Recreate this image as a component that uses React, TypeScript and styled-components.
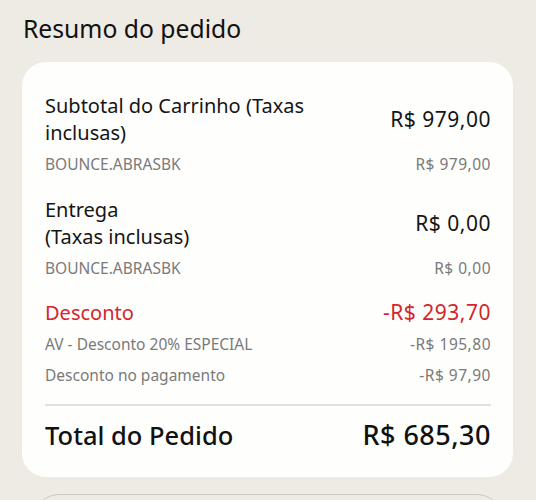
import React from "react";
import styled, { createGlobalStyle } from "styled-components";

const Global = createGlobalStyle`
  html, body { margin: 0; padding: 0; background: #eeeae4; }
  body { font-family: "Noto Sans", "Open Sans", sans-serif; color: #111; }
`;

const Page = styled.div`
  width: 536px;
  height: 500px;
  overflow: hidden;
  box-sizing: border-box;
  padding: 13px 23px 0 22px;
  background: #eeeae4;
`;

const Heading = styled.h1`
  margin: 0 0 17px 1px;
  font-size: 24.7px;
  line-height: 32px;
  font-weight: 400;
  color: #111;
`;

const Card = styled.section`
  background: #fefefd;
  border-radius: 24px;
  padding: 30px 22px 26px 23px;
  display: flex;
  flex-direction: column;
`;

const Group = styled.div<{ $gap?: number }>`
  display: flex;
  flex-direction: column;
  margin-top: ${(p) => p.$gap ?? 0}px;
`;

const MainRow = styled.div<{ $red?: boolean }>`
  display: flex;
  justify-content: space-between;
  align-items: center;
  font-size: 20px;
  line-height: 27px;
  color: ${(p) => (p.$red ? "#d4252c" : "#151515")};
`;

const SubRow = styled.div`
  display: flex;
  justify-content: space-between;
  align-items: center;
  margin-top: 8px;
  font-size: 15.5px;
  line-height: 20px;
  color: #7a7a7a;

  & + & {
    margin-top: 11px;
  }
`;

const Label = styled.span`
  max-width: 300px;
`;

const Value = styled.span<{ $size?: number; $spacing?: number }>`
  white-space: nowrap;
  font-size: ${(p) => (p.$size ? `${p.$size}px` : "inherit")};
  letter-spacing: ${(p) => p.$spacing ?? 0}px;
`;

const Divider = styled.hr`
  border: none;
  border-top: 2px solid #e2e0dd;
  margin: 19px 0 13px;
`;

const TotalRow = styled.div`
  display: flex;
  justify-content: space-between;
  align-items: center;
  font-size: 25.5px;
  line-height: 32px;
  font-weight: 500;
  color: #111;
`;

const NextButton = styled.div`
  margin: 17px 10px 0 11px;
  height: 50px;
  border: 1px solid #cdc8c0;
  border-radius: 28px;
  background: #eeeae4;
`;

export default function App() {
  return (
    <Page>
      <Global />
      <Heading>Resumo do pedido</Heading>
      <Card>
        <Group>
          <MainRow>
            <Label>Subtotal do Carrinho (Taxas inclusas)</Label>
            <Value $size={21} $spacing={0.5}>R$ 979,00</Value>
          </MainRow>
          <SubRow>
            <span>BOUNCE.ABRASBK</span>
            <Value $spacing={0.5}>R$ 979,00</Value>
          </SubRow>
        </Group>
        <Group $gap={22}>
          <MainRow>
            <Label>
              Entrega
              <br />
              (Taxas inclusas)
            </Label>
            <Value $size={21} $spacing={0.5}>R$ 0,00</Value>
          </MainRow>
          <SubRow>
            <span>BOUNCE.ABRASBK</span>
            <Value $spacing={0.5}>R$ 0,00</Value>
          </SubRow>
        </Group>
        <Group $gap={21}>
          <MainRow $red>
            <Label>Desconto</Label>
            <Value $size={21} $spacing={0.5}>-R$ 293,70</Value>
          </MainRow>
          <SubRow>
            <span>AV - Desconto 20% ESPECIAL</span>
            <Value $spacing={0.5}>-R$ 195,80</Value>
          </SubRow>
          <SubRow>
            <span>Desconto no pagamento</span>
            <Value $spacing={0.5}>-R$ 97,90</Value>
          </SubRow>
        </Group>
        <Divider />
        <TotalRow>
          <span>Total do Pedido</span>
          <Value $size={27} $spacing={0.5}>R$ 685,30</Value>
        </TotalRow>
      </Card>
      <NextButton />
    </Page>
  );
}
